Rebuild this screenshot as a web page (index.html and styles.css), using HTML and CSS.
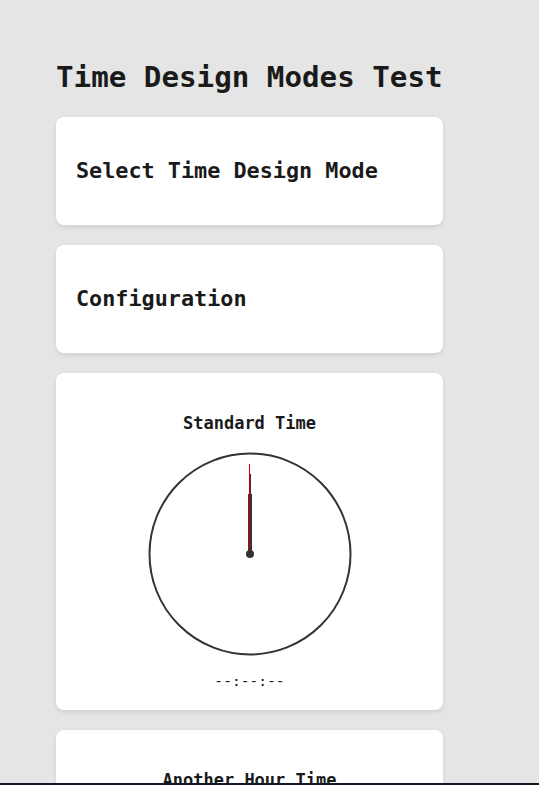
FILE: index.html
```html
<!DOCTYPE html>
<html lang="en">
<head>
<meta charset="utf-8">
<title>Time Design Modes Test</title>
<link rel="stylesheet" href="styles.css">
</head>
<body>
<main class="page">
  <h1 class="title">Time Design Modes Test</h1>
  <section class="card">
    <h2 class="card-title">Select Time Design Mode</h2>
  </section>
  <section class="card">
    <h2 class="card-title">Configuration</h2>
  </section>
  <section class="card clock-card">
    <h3 class="clock-title">Standard Time</h3>
    <svg class="clock" width="204" height="204" viewBox="0 0 204 204">
      <circle cx="102" cy="102" r="100.5" fill="none" stroke="#333" stroke-width="2"/>
      <line x1="102" y1="102" x2="102" y2="42" stroke="#333" stroke-width="4"/>
      <line x1="102" y1="102" x2="102" y2="22" stroke="#333" stroke-width="2"/>
      <line x1="101.5" y1="102" x2="101.5" y2="12" stroke="#d40000" stroke-width="1"/>
      <circle cx="102" cy="102" r="4" fill="#333"/>
    </svg>
    <p class="clock-time">--:--:--</p>
  </section>
  <section class="card clock-card">
    <h3 class="clock-title">Another Hour Time</h3>
  </section>
</main>
<div class="bottom-edge"></div>
</body>
</html>
```
FILE: styles.css
```css
html, body {
  margin: 0;
  padding: 0;
  background: #e5e5e5;
}
body {
  font-family: "DejaVu Sans Mono", "Liberation Mono", monospace;
  color: #1a1a1a;
}
.page {
  width: 387px;
  padding: 37px 0 40px 56px;
  display: flex;
  flex-direction: column;
  gap: 20px;
}
.title {
  font-size: 29.2px;
  line-height: 38px;
  font-weight: bold;
  margin: 21px 0 1px;
  white-space: nowrap;
}
.card {
  background: #ffffff;
  border-radius: 8px;
  box-shadow: 0 2px 4px rgba(0, 0, 0, 0.1);
  padding: 20px;
}
.card-title {
  font-size: 21.8px;
  line-height: 28px;
  font-weight: bold;
  margin: 20px 0;
  white-space: nowrap;
}
.clock-card {
  display: flex;
  flex-direction: column;
  align-items: center;
}
.clock-title {
  font-size: 17px;
  line-height: 22px;
  font-weight: bold;
  margin: 19px 0 18px;
}
.clock {
  display: block;
}
.clock-time {
  font-size: 14.6px;
  line-height: 18px;
  margin: 16px 0 0;
}
.bottom-edge {
  position: fixed;
  left: 0;
  right: 0;
  bottom: 0;
  height: 2px;
  background: #111827;
}
```
